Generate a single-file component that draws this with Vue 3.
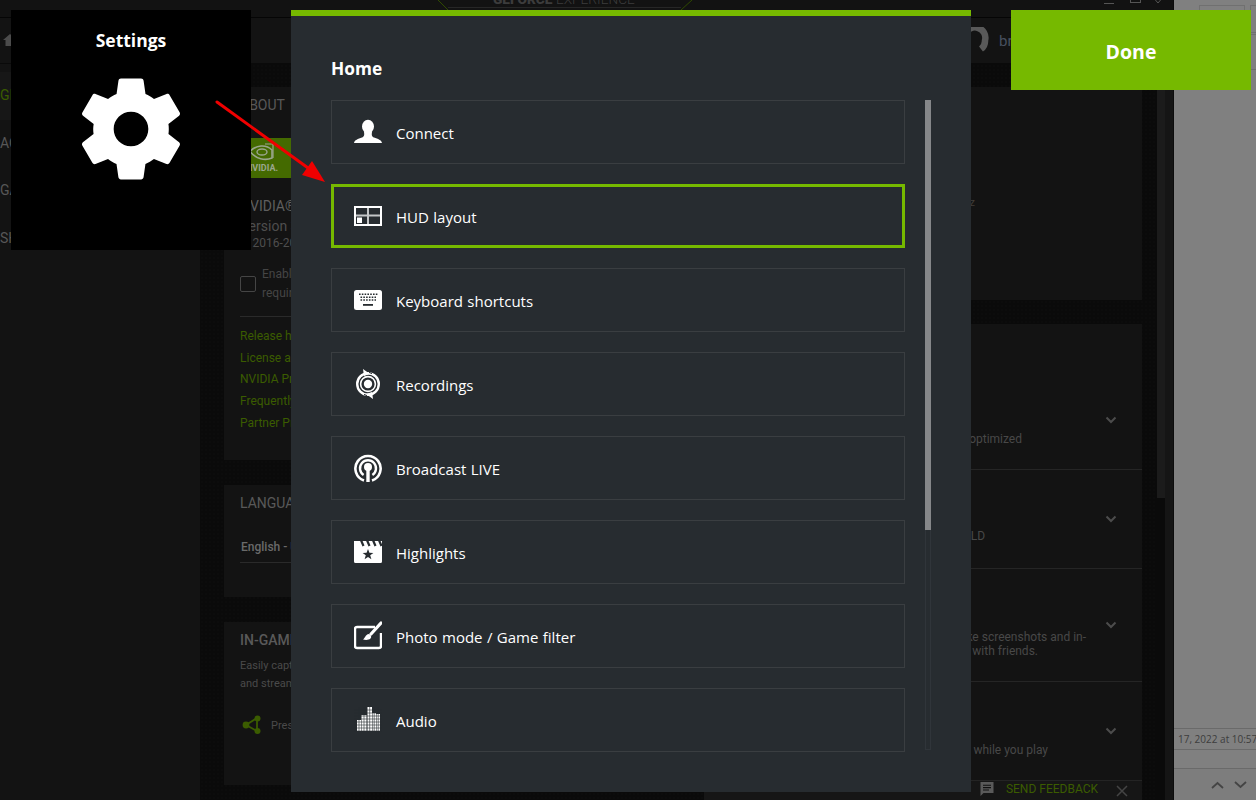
<script setup>
const links = ['Release highlights', 'License agreements', 'NVIDIA Privacy Policy', 'Frequently asked questions', 'Partner Programs']
const rows = [
  { cls: 'r1', lines: ['Automatically keep your games optimized'] },
  { cls: 'r2', lines: ['Stream games to NVIDIA SHIELD'] },
  { cls: 'r3', lines: ['Easily capture and take screenshots and in-', 'game videos to share with friends.'] },
  { cls: 'r4', lines: ['Get performance stats while you play'] }
]
const items = ['Connect', 'HUD layout', 'Keyboard shortcuts', 'Recordings', 'Broadcast LIVE', 'Highlights', 'Photo mode / Game filter', 'Audio']
const gridY = [2, 5, 8, 11, 14, 17, 20, 23]
</script>

<template>
  <div class="page">
    <div class="app">
      <div class="titlebar">
        <svg class="logo-frame" width="256" height="11" viewBox="0 0 256 11">
          <path d="M1 0 L11 10 M255 0 L244 10" stroke="#2f4a00" stroke-width="1" fill="none"/>
          <path d="M11 7.5 H244" stroke="#262626" stroke-width="1"/>
        </svg>
        <div class="logo">
          <span class="logo-a">GEFORCE</span> <span class="logo-b">EXPERIENCE</span>
        </div>
        <div class="winbtns">
          <span class="w-min"></span><span class="w-max"></span>
          <svg width="14" height="6" viewBox="0 0 14 6"><path d="M1-4 L7 3 L13-4" fill="none" stroke="#555" stroke-width="1"/></svg>
        </div>
      </div>
      <div class="navbar">
        <svg class="home" width="14" height="14" viewBox="0 0 14 14"><path d="M7 1 L14 7 H11.5 V13 H2.5 V7 H0 Z" fill="#4c4c4c"/></svg>
        <div class="user">
          <svg class="avatar" width="27" height="27" viewBox="0 0 27 27"><path d="M3 8 A10 10 0 0 1 23 13.5 A10 10 0 0 1 19 22" fill="none" stroke="#595959" stroke-width="6.5"/></svg>
          <span class="uname">brian</span>
        </div>
      </div>
      <div class="body">
        <div class="sidebar">
          <div class="side active">GENERAL</div>
          <div class="side">ACCOUNT</div>
          <div class="side">GAMES</div>
          <div class="side">SHIELD</div>
        </div>
        <div class="main">
          <div class="col">
            <section class="card about">
              <h3>ABOUT</h3>
              <div class="nv-badge">
                <svg width="52" height="40" viewBox="0 0 52 40">
                  <path d="M0 40 L6 0 H52 V40 Z" fill="#446a00"/>
                  <path d="M11 13.5 C17 7 27 6 33 12 L33 20 C26 23 17 21 11 13.5 Z" fill="none" stroke="#9aa68c" stroke-width="1.6"/>
                  <ellipse cx="23" cy="14" rx="5" ry="3" fill="none" stroke="#9aa68c" stroke-width="1.4"/>
                  <path d="M26 6 H34 V20" fill="none" stroke="#9aa68c" stroke-width="1.2"/>
                  <text x="7" y="33" class="nv-text">NVIDIA.</text>
                </svg>
              </div>
              <div class="prod">NVIDIA® GeForce Experience</div>
              <div class="ver">Version 3.25.1.27</div>
              <div class="copy">© 2016-2022 NVIDIA Corporation</div>
              <div class="check">
                <span class="box"></span>
                <span class="check-t">Enable experimental features. A GeForce<br>requires an update</span>
              </div>
              <div class="links"><a v-for="l in links" :key="l">{{ l }}</a></div>
            </section>
            <section class="card lang">
              <h3>LANGUAGE</h3>
              <div class="select">English - United States</div>
            </section>
            <section class="card ingame">
              <h3 class="strong">IN-GAME OVERLAY</h3>
              <p>Easily capture and share videos, take screenshots,<br>and stream your gameplay with friends.</p>
              <div class="press">
                <svg width="20" height="20" viewBox="0 0 20 20"><path d="M15 3 L4 10 L15 16 Z" fill="none" stroke="#3b5c00" stroke-width="1.8"/><circle cx="15.5" cy="3.5" r="3" fill="#3b5c00"/><circle cx="4" cy="10" r="3.4" fill="#3b5c00"/><circle cx="15.5" cy="16" r="3" fill="#3b5c00"/></svg>
                <span>Press Alt+Z to share your gameplay</span>
              </div>
            </section>
          </div>
          <div class="col">
            <section class="card rig"><div class="ghz">3.60 GHz</div></section>
            <section class="card features">
              <div v-for="r in rows" :key="r.cls" class="row" :class="r.cls">
                <div class="row-text"><div v-for="t in r.lines" :key="t">{{ t }}</div></div>
                <svg class="chev" width="12" height="8" viewBox="0 0 12 8"><path d="M1.5 1.5 L6 6 L10.5 1.5" fill="none" stroke="#4c4c4c" stroke-width="2"/></svg>
              </div>
            </section>
            <div class="feedback">
              <svg width="16" height="16" viewBox="0 0 16 16"><path d="M1.5 1 H14.5 V12 H4.5 L1.5 15 Z" fill="#5a5a5a"/><path d="M4 4.2 H12 M4 6.6 H12 M4 9 H10" stroke="#111" stroke-width="1.1"/></svg>
              <span class="fb-t">SEND FEEDBACK</span>
              <svg class="fb-x" width="12" height="12" viewBox="0 0 12 12"><path d="M1 1 L11 11 M11 1 L1 11" stroke="#444" stroke-width="1.5"/></svg>
            </div>
          </div>
        </div>
        <div class="scrollbar"><div class="thumb"></div></div>
      </div>
    </div>

    <aside class="behind">
      <div class="topboxes"><span class="tb1"></span><span class="tb2"></span></div>
      <div class="hline h1"></div>
      <div class="hline h2"></div>
      <div class="spacer"></div>
      <div class="date">17, 2022 at 10:57 AM</div>
      <div class="blank"></div>
      <div class="foot">
        <svg width="13" height="8" viewBox="0 0 13 8"><path d="M1 7 L6.5 2 L12 7" fill="none" stroke="#444" stroke-width="1.8"/></svg>
        <svg width="13" height="8" viewBox="0 0 13 8"><path d="M1 1 L6.5 6 L12 1" fill="none" stroke="#444" stroke-width="1.8"/></svg>
      </div>
    </aside>

    <div class="settings">
      <div class="settings-t">Settings</div>
      <svg class="gear" width="126" height="126" viewBox="0 0 24 24"><path fill="#fff" d="M19.14 12.94c.04-.3.06-.61.06-.94 0-.32-.02-.64-.07-.94l2.03-1.58c.18-.14.23-.41.12-.61l-1.92-3.32c-.12-.22-.37-.29-.59-.22l-2.39.96c-.5-.38-1.03-.7-1.62-.94l-.36-2.54c-.04-.24-.24-.41-.48-.41h-3.84c-.24 0-.43.17-.47.41l-.36 2.54c-.59.24-1.13.57-1.62.94l-2.39-.96c-.22-.08-.47 0-.59.22L2.74 8.87c-.12.21-.08.47.12.61l2.03 1.58c-.05.3-.09.63-.09.94s.02.64.07.94l-2.03 1.58c-.18.14-.23.41-.12.61l1.92 3.32c.12.22.37.29.59.22l2.39-.96c.5.38 1.03.7 1.62.94l.36 2.54c.05.24.24.41.48.41h3.84c.24 0 .44-.17.47-.41l.36-2.54c.59-.24 1.13-.56 1.62-.94l2.39.96c.22.08.47 0 .59-.22l1.92-3.32c.12-.22.07-.47-.12-.61l-2.01-1.58zM12 15.3c-1.82 0-3.3-1.48-3.3-3.3s1.48-3.3 3.3-3.3 3.3 1.48 3.3 3.3-1.48 3.3-3.3 3.3z"/></svg>
    </div>

    <div class="panel">
      <h2>Home</h2>
      <div class="panel-body">
        <div class="list">
          <div v-for="(it, i) in items" :key="it" class="item" :class="{ sel: i === 1 }">
            <svg class="ico" width="28" height="32" viewBox="0 0 28 32">
              <g v-if="i === 0" fill="#fff">
                <ellipse cx="14" cy="10.5" rx="6" ry="6.8"/>
                <path d="M0 27 C0.5 24 4 23 8 21.5 C10 20.6 10.6 19.5 10 16 H18 C17.4 19.5 18 20.6 20 21.5 C24 23 27.5 24 28 27 Z"/>
              </g>
              <g v-else-if="i === 1">
                <rect x="1" y="7" width="26" height="18" fill="none" stroke="#fff" stroke-width="2"/>
                <path d="M14 8 V24 M2 15.5 H26" stroke="#c4c6c7" stroke-width="2"/>
                <rect x="3" y="17.5" width="5" height="5.5" fill="#fff"/>
              </g>
              <g v-else-if="i === 2">
                <rect x="0" y="6" width="28" height="20" rx="2.5" fill="#fff"/>
                <path d="M5 10.3 H23.5 M6.5 13.2 H22 M6.5 16 H22" stroke="#272c30" stroke-width="1.6" stroke-dasharray="1.6 1.2"/>
                <rect x="9" y="20" width="10" height="1.8" fill="#272c30"/>
              </g>
              <g v-else-if="i === 3">
                <circle cx="14" cy="16" r="10.8" fill="none" stroke="#fff" stroke-width="2.4"/>
                <circle cx="14" cy="16" r="7.4" fill="none" stroke="#fff" stroke-width="1.6"/>
                <circle cx="14" cy="16" r="4.2" fill="#fff"/>
                <path d="M9 1 L16 6 L10 8 Z M19 31 L12 26 L18 24 Z" fill="#fff"/>
                <path d="M15 4.4 L18 5.6 M13 27.6 L10 26.4" stroke="#272c30" stroke-width="1"/>
              </g>
              <g v-else-if="i === 4" fill="none" stroke="#fff">
                <path d="M10 28.5 A12.6 12.6 0 1 1 18 28.5" stroke-width="2.6"/>
                <path d="M9.6 23 A8 8 0 1 1 18.4 23" stroke-width="2.4"/>
                <circle cx="14" cy="15" r="4" fill="#fff" stroke="none"/>
                <path d="M14 16 V30" stroke-width="3.4"/>
              </g>
              <g v-else-if="i === 5">
                <path d="M0 5 H28 V25.5 a1.5 1.5 0 0 1-1.5 1.5 H1.5 a1.5 1.5 0 0 1-1.5-1.5 Z" fill="#fff"/>
                <path d="M6.5 3 L9.5 10 M12.5 3 L15.5 10 M18.5 3 L21.5 10 M24.5 3 L27.5 10" stroke="#272c30" stroke-width="2.2"/>
                <path d="M14 13 L15.4 16.8 L19.4 16.9 L16.2 19.3 L17.4 23.2 L14 20.9 L10.6 23.2 L11.8 19.3 L8.6 16.9 L12.6 16.8 Z" fill="#272c30"/>
              </g>
              <g v-else-if="i === 6">
                <path d="M21 7 H3 a2 2 0 0 0-2 2 V26 a2 2 0 0 0 2 2 H25 a2 2 0 0 0 2-2 V13" fill="none" stroke="#fff" stroke-width="2.4"/>
                <path d="M27 3 L17 14" stroke="#fff" stroke-width="3.2" stroke-linecap="round"/>
                <path d="M15 14 C17 15 18 17 16.5 18.6 C14.5 20.4 11 20 9 19.5 C11 18.6 11 14.6 15 14 Z" fill="#fff"/>
              </g>
              <g v-else>
                <rect x="3" y="16" width="4" height="11" fill="#fff"/>
                <rect x="7.5" y="11" width="5" height="16" fill="#fff"/>
                <rect x="13.5" y="3" width="4.5" height="24" fill="#fff"/>
                <rect x="18.5" y="9" width="3.5" height="18" fill="#fff"/>
                <rect x="22.5" y="10" width="3.5" height="17" fill="#fff"/>
                <path v-for="y in gridY" :key="'y' + y" :d="`M0 ${y + 4} H28`" stroke="#272c30" stroke-width=".6"/>
                <path d="M5 3 V27 M10 3 V27 M15.7 3 V27 M20.2 3 V27 M24.2 3 V27" stroke="#272c30" stroke-width=".6"/>
              </g>
            </svg>
            <span class="label">{{ it }}</span>
          </div>
        </div>
        <div class="track"><div class="track-thumb"></div></div>
      </div>
    </div>

    <button class="done">Done</button>

    <svg class="arrow" width="130" height="100" viewBox="0 0 130 100">
      <path d="M2 3 L100 74" stroke="#f00000" stroke-width="3" stroke-linecap="round"/>
      <path d="M110 83 L87 76 L97 62 Z" fill="#f00000"/>
    </svg>
  </div>
</template>

<style>
html, body { margin: 0; background: #000; }
</style>

<style scoped>
.page {
  position: relative;
  width: 1256px;
  height: 800px;
  overflow: hidden;
  display: flex;
  font-family: "Roboto", "Liberation Sans", sans-serif;
  background: #808080;
}
.app {
  width: 1174px;
  height: 800px;
  flex: none;
  display: flex;
  flex-direction: column;
  background: #0a0a0a;
  border-right: 1px solid #0c0c0c;
  box-sizing: border-box;
}
.titlebar {
  height: 17px;
  flex: none;
  background: #121212;
  border-bottom: 1px solid #050505;
  position: relative;
  overflow: hidden;
  display: flex;
  justify-content: flex-end;
}
.logo-frame { position: absolute; left: 437px; top: 0; }
.logo {
  position: absolute;
  left: 493px;
  top: -11px;
  font-size: 13.7px;
  line-height: 20px;
  white-space: nowrap;
  color: #3c3c3c;
}
.logo-a { font-weight: 900; }
.logo-b { font-weight: 300; }
.winbtns { display: flex; align-items: flex-start; gap: 10px; padding-right: 8px; height: 4px; }
.w-min { width: 10px; height: 3px; border-bottom: 1px solid #555; margin-right: 6px; }
.w-max { width: 9px; height: 2px; border: 1px solid #555; border-top: 0; }
.navbar {
  height: 45px;
  flex: none;
  background: #131313;
  display: flex;
  align-items: center;
  justify-content: space-between;
  padding-left: 3px;
  border-bottom: 1px solid #0a0a0a;
}
.home { margin-top: -1px; }
.user { display: flex; align-items: center; gap: 10px; width: 203px; }
.avatar { margin-left: -8px; flex: none; }
.uname { color: #47505f; font-size: 15px; }
.body { flex: 1; display: flex; min-height: 0; }
.sidebar { width: 200px; flex: none; background: #131313; padding-top: 8px; box-sizing: border-box; }
.side {
  height: 47.5px;
  line-height: 47.5px;
  font-size: 14px;
  color: #575757;
  white-space: nowrap;
}
.side.active { color: #3b5c00; background: #171717; }
.main {
  flex: 1;
  min-width: 0;
  display: grid;
  grid-template-columns: 456px 438px;
  column-gap: 24px;
  padding: 23px 16px 0 24px;
  box-sizing: border-box;
  overflow: hidden;
  background-image: radial-gradient(#0c0c0c 1px, transparent 1px);
  background-size: 4px 4px;
}
.col { display: flex; flex-direction: column; min-width: 0; }
.card { background: #131313; margin-bottom: 25px; padding: 0 16px; box-sizing: border-box; overflow: hidden; }
h3 { margin: 0; font-weight: 400; font-size: 14px; line-height: 18px; color: #595959; }
h3.strong { font-weight: 500; }
.about { height: 373px; padding-top: 9px; }
.nv-badge { margin: 24px 0 0 -1px; height: 40px; }
.nv-text { font: 700 9px "Roboto", sans-serif; fill: #9aa68c; }
.prod { margin-top: 19px; font-size: 14px; line-height: 18px; color: #5f5f5f; white-space: nowrap; }
.ver { margin-top: 2px; font-size: 14px; line-height: 18px; color: #4e4e4e; }
.copy { font-size: 12px; line-height: 16px; color: #4e4e4e; white-space: nowrap; }
.check { display: flex; gap: 6px; margin-top: 14px; padding-bottom: 13px; border-bottom: 1px solid #2a2a2a; align-items: center; }
.box { width: 16px; height: 16px; box-sizing: border-box; border: 1.5px solid #454545; border-radius: 2px; flex: none; }
.check-t { font-size: 12px; line-height: 19px; color: #454545; white-space: nowrap; }
.links { display: flex; flex-direction: column; margin-top: 9px; }
.links a { font-size: 12px; line-height: 21.7px; color: #3b5c00; white-space: nowrap; }
.lang { height: 112px; padding-top: 9px; }
.select {
  margin-top: 23px;
  height: 27px;
  line-height: 24px;
  font-size: 12px;
  font-weight: 500;
  color: #6a6a6a;
  border-bottom: 1px solid #2a2a2a;
  padding-left: 1px;
}
.ingame { flex: 1; padding-top: 9px; margin-bottom: 15px; }
.ingame p { margin: 8px 0 0; font-size: 11px; line-height: 17.5px; color: #4a4a4a; white-space: nowrap; }
.press { display: flex; align-items: center; gap: 9px; margin: 23px 0 0 2px; font-size: 11px; color: #4a4a4a; white-space: nowrap; }
.rig { height: 213px; position: relative; margin-bottom: 24px; flex: none; }
.ghz { position: absolute; right: 167px; top: 109px; font-size: 11px; color: #403c38; white-space: nowrap; }
.features { flex: none; height: 456px; padding: 47px 0 0; margin-bottom: 0; }
.row {
  display: flex;
  align-items: center;
  justify-content: flex-end;
  border-bottom: 1px solid #252525;
  box-sizing: border-box;
  position: relative;
}
.row-text {
  position: absolute;
  font-size: 12px;
  line-height: 14px;
  color: #484848;
  white-space: nowrap;
  text-align: right;
}
.chev { margin-right: 25px; }
.r1 { height: 99px; }
.r2 { height: 99px; }
.r3 { height: 113px; }
.r4 { height: 98px; border-bottom: 0; }
.r1 .chev { margin-top: -1px; }
.r1 .row-text { right: 120px; top: 61px; }
.r2 .row-text { right: 157px; top: 59px; }
.r3 .row-text { right: 56px; top: 61px; }
.r3 .row-text > div + div { margin-right: 48px; }
.r4 .row-text { right: 94px; top: 61px; }
.r3 .chev { margin-top: -1px; }
.r4 .chev { margin-top: -1px; }
.feedback {
  height: 20px;
  flex: none;
  background: #161616;
  border-top: 1px solid #242424;
  display: flex;
  align-items: center;
  justify-content: flex-end;
  box-sizing: border-box;
  font-size: 12px;
  padding-bottom: 4px;
}
.fb-t { color: #3b5c00; margin: 0 18px 0 11px; }
.fb-x { margin-right: 14px; margin-top: 5px; }
.scrollbar { width: 16px; flex: none; background: linear-gradient(90deg, #0a0a0a 50%, #151515 50%); }
.thumb { width: 8px; height: 434px; background: #1b1b1b; }

.behind { flex: 1; display: flex; flex-direction: column; font-family: "Open Sans", sans-serif; min-width: 0; overflow: hidden; }
.topboxes { height: 32px; flex: none; display: flex; align-items: flex-start; gap: 5px; padding: 5px 0 0 25px; box-sizing: border-box; }
.tb1 { width: 46px; height: 30px; border: 1px solid #707070; box-sizing: border-box; flex: none; }
.tb2 { width: 40px; height: 30px; border: 1px solid #707070; box-sizing: border-box; flex: none; }
.hline { height: 1px; background: #707070; flex: none; }
.h2 { margin-top: 36px; }
.spacer { flex: 1; }
.date {
  height: 20px;
  flex: none;
  border-top: 1px solid #6a6a6a;
  border-bottom: 1px solid #6a6a6a;
  font-size: 10px;
  line-height: 20px;
  color: #3d3d3d;
  white-space: nowrap;
  padding-left: 4px;
}
.blank { height: 18px; flex: none; border-bottom: 1px solid #6a6a6a; }
.foot { flex: none; height: 31px; display: flex; gap: 10px; align-items: center; padding-left: 37px; background: #7d7d7d; }

.settings {
  position: absolute;
  left: 11px;
  top: 10px;
  width: 240px;
  height: 240px;
  background: #000;
  display: flex;
  flex-direction: column;
  align-items: center;
  font-family: "Open Sans", sans-serif;
}
.settings-t { margin-top: 17px; font-size: 17.5px; line-height: 26px; font-weight: 700; color: #fff; }
.gear { margin-top: 13px; }

.panel {
  position: absolute;
  left: 291px;
  top: 10px;
  width: 680px;
  height: 782px;
  background: #272c30;
  border-top: 6px solid #76b900;
  box-sizing: border-box;
  padding: 0 40px;
  font-family: "Open Sans", sans-serif;
  color: #fff;
}
h2 { margin: 0; padding-top: 40px; font-size: 17.3px; line-height: 26px; font-weight: 700; }
.panel-body { display: flex; margin-top: 18px; gap: 20px; }
.list { width: 574px; display: flex; flex-direction: column; gap: 20px; flex: none; }
.item {
  height: 64px;
  box-sizing: border-box;
  border: 1px solid #3a3e41;
  display: flex;
  align-items: center;
  gap: 14px;
  padding-left: 22px;
  font-size: 15px;
  word-spacing: 0.5px;
}
.label { margin-top: 1px; }
.item.sel { border: 3px solid #76b900; padding-left: 20px; }
.ico { flex: none; }
.track { width: 6px; height: 650px; flex: none; border: 1px solid #30353a; box-sizing: border-box; position: relative; }
.track-thumb { position: absolute; left: -1px; top: -1px; width: 6px; height: 430px; background: #858789; }

.done {
  position: absolute;
  left: 1011px;
  top: 10px;
  width: 240px;
  height: 80px;
  border: 0;
  padding: 2px 0 0;
  background: #76b900;
  color: #fff;
  font-family: "Open Sans", sans-serif;
  font-size: 19.5px;
  font-weight: 700;
}
.arrow { position: absolute; left: 215px; top: 99px; }
</style>
